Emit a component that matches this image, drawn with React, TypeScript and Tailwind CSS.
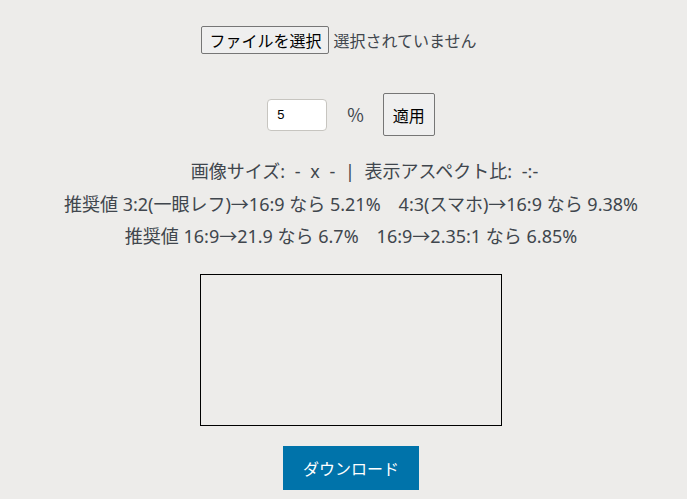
export default function App() {
  return (
    <div
      className="min-h-[499px] w-full bg-[#edecea] text-[#40464d] pl-[15px]"
      style={{ fontFamily: '"Noto Sans CJK JP", "Noto Sans", sans-serif' }}
    >
      <div className="flex flex-col items-center pt-[26px]">
        <div className="flex items-center h-[28px] -ml-[24px]">
          <button className="h-[28px] px-[7px] border border-[#767676] rounded-[2px] bg-[#efefef] text-[16px] text-black leading-none">
            ファイルを選択
          </button>
          <span className="ml-[4px] text-[16px]">選択されていません</span>
        </div>
        <div className="flex items-center mt-[39px] h-[43px]">
          <input
            defaultValue="5"
            className="w-[60px] h-[32px] border border-[#c7c5c0] rounded-[4px] bg-white px-[9px] text-[13px] text-black outline-none"
            style={{ fontFamily: '"Liberation Sans", Arial, sans-serif' }}
          />
          <span className="ml-[20px] text-[18px]">%</span>
          <button className="ml-[19px] w-[52px] h-[43px] border border-[#767676] rounded-[2px] bg-[#efefef] text-[16px] text-black">
            適用
          </button>
        </div>
        <div
          className="mt-[19px] flex flex-col items-center text-[18px] leading-[32.5px]"
          style={{ fontFamily: '"Noto Sans", "Noto Sans CJK JP", sans-serif' }}
        >
          <p className="ml-[27px] [word-spacing:5px]">画像サイズ: - x - | 表示アスペクト比: -:-</p>
          <p>推奨値 3:2(一眼レフ)→16:9 なら 5.21%　4:3(スマホ)→16:9 なら 9.38%</p>
          <p>推奨値 16:9→21.9 なら 6.7%　16:9→2.35:1 なら 6.85%</p>
        </div>
        <div className="mt-[21px] w-[302px] h-[152px] border border-black" />
        <button className="mt-[20px] w-[136px] h-[44px] bg-[#0073aa] text-white text-[16px]">
          ダウンロード
        </button>
      </div>
    </div>
  );
}
